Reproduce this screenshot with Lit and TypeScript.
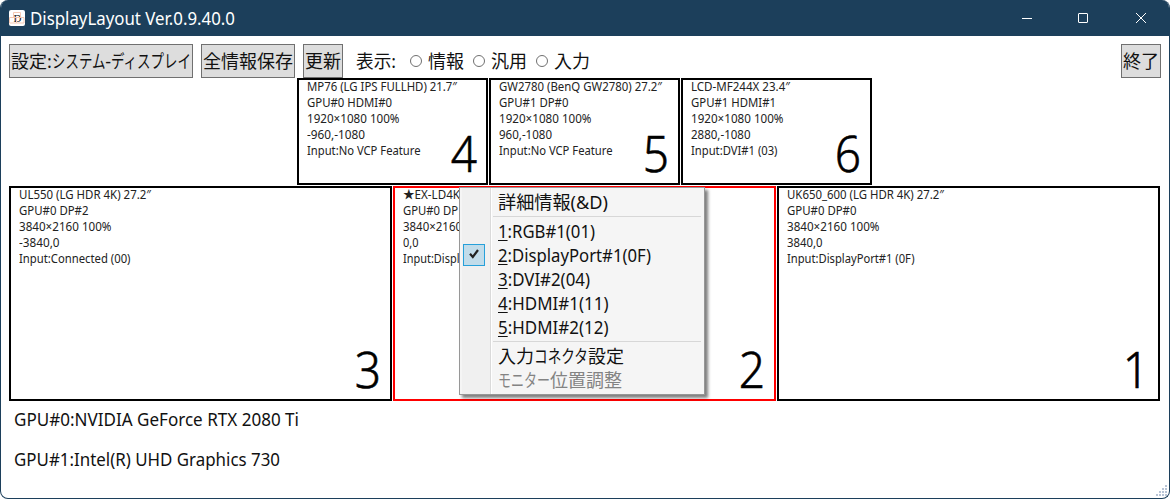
import { LitElement, html, css, svg, nothing } from "lit";
import { customElement, property } from "lit/decorators.js";

const FONT = css`"Noto Sans", "Noto Sans CJK JP", sans-serif`;

/**
 * One line of text set to the given advance width. Latin and kanji lines scale
 * as a whole; in lines with katakana only the katakana are condensed.
 */
@customElement("fit-text")
class FitText extends LitElement {
  @property({ type: Number }) w = 0;
  @property() text = "";
  @property({ type: Boolean }) mnemonic = false;

  static styles = css`
    :host { display: block; white-space: nowrap; flex: none; }
    .run, .part, .glyphs { display: inline-block; vertical-align: top; }
    .run, .glyphs { transform-origin: 0 50%; }
    .key { text-decoration: underline; text-decoration-thickness: 1px; text-underline-offset: 2px; }
  `;

  render() {
    if (this.mnemonic) {
      return html`<span class="run"><span class="key">${this.text[0]}</span>${this.text.slice(1)}</span>`;
    }
    const runs = this.text.split(/([\u30a0-\u30ff]+)/).filter((s) => s);
    return html`<span class="run">${runs.map((s) =>
      /[\u30a0-\u30ff]/.test(s) ? html`<span class="part"><span class="glyphs">${s}</span></span>` : s
    )}</span>`;
  }

  firstUpdated() {
    const run = this.renderRoot.querySelector(".run") as HTMLElement;
    const natural = run.getBoundingClientRect().width;
    if (!this.w || !natural) return;
    this.style.width = `${this.w}px`;
    const parts = [...this.renderRoot.querySelectorAll<HTMLElement>(".part")];
    if (!parts.length) {
      run.style.transform = `scaleX(${this.w / natural})`;
      return;
    }
    const widths = parts.map((p) => p.getBoundingClientRect().width);
    const kana = widths.reduce((a, b) => a + b, 0);
    const f = (this.w - (natural - kana)) / kana;
    parts.forEach((p, i) => {
      p.style.width = `${widths[i] * f}px`;
      (p.firstElementChild as HTMLElement).style.transform = `scaleX(${f})`;
    });
  }
}

type Line = [string, number];

interface Monitor {
  no: number;
  lines: Line[];
  active?: boolean;
}

const upper: Monitor[] = [
  { no: 4, lines: [["MP76 (LG IPS FULLHD) 21.7″", 150], ["GPU#0 HDMI#0", 85], ["1920×1080 100%", 92.5], ["-960,-1080", 58], ["Input:No VCP Feature", 113.5]] },
  { no: 5, lines: [["GW2780 (BenQ GW2780) 27.2″", 163], ["GPU#1 DP#0", 69.5], ["1920×1080 100%", 92.5], ["960,-1080", 53], ["Input:No VCP Feature", 113.5]] },
  { no: 6, lines: [["LCD-MF244X 23.4″", 99], ["GPU#1 HDMI#1", 85], ["1920×1080 100%", 92.5], ["2880,-1080", 59.5], ["Input:DVI#1 (03)", 86.5]] },
];

const lower: Monitor[] = [
  { no: 3, lines: [["UL550 (LG HDR 4K) 27.2″", 132], ["GPU#0 DP#2", 69.5], ["3840×2160 100%", 92.5], ["-3840,0", 40.5], ["Input:Connected (00)", 111.5]] },
  { no: 2, active: true, lines: [["★EX-LD4K", 57], ["GPU#0 DP", 55], ["3840×2160", 59], ["0,0", 15.5], ["Input:Displ", 56.5]] },
  { no: 1, lines: [["UK650_600 (LG HDR 4K) 27.2″", 157], ["GPU#0 DP#0", 69.5], ["3840×2160 100%", 92.5], ["3840,0", 35.5], ["Input:DisplayPort#1 (0F)", 127.5]] },
];

@customElement("monitor-box")
class MonitorBox extends LitElement {
  @property({ attribute: false }) data!: Monitor;

  static styles = css`
    :host { display: flex; box-sizing: border-box; }
    .box { flex: 1; box-sizing: border-box; border: 2px solid #000; display: flex; background: #fff; min-width: 0; }
    .active { border-color: #f00; }
    .info { margin: -1px 0 0 8px; font: 12px/16px ${FONT}; color: #222; flex: 1; min-width: 0; }
    .no { align-self: flex-end; flex: none; width: 44px; margin-left: -44px; text-align: center; font: 300 50px/60px ${FONT}; color: #000; -webkit-text-stroke: 0.6px #000; transform: scaleX(0.92); }
  `;

  render() {
    const m = this.data;
    return html`<div class="box ${m.active ? "active" : ""}">
      <div class="info">${m.lines.map(([t, w]) => html`<fit-text .text=${t} .w=${w}></fit-text>`)}</div>
      <div class="no">${m.no}</div>
    </div>`;
  }
}

interface Entry {
  text?: string;
  w?: number;
  key?: boolean;
  checked?: boolean;
  disabled?: boolean;
}

const entries: Entry[] = [
  { text: "詳細情報(&D)", w: 110 },
  {},
  { text: "1:RGB#1(01)", w: 97, key: true },
  { text: "2:DisplayPort#1(0F)", w: 153, key: true, checked: true },
  { text: "3:DVI#2(04)", w: 92, key: true },
  { text: "4:HDMI#1(11)", w: 110.5, key: true },
  { text: "5:HDMI#2(12)", w: 110.5, key: true },
  {},
  { text: "入力コネクタ設定", w: 126 },
  { text: "モニター位置調整", w: 124, disabled: true },
];

@customElement("context-menu")
class ContextMenu extends LitElement {
  static styles = css`
    :host { display: block; box-sizing: border-box; width: 246px; border: 1px solid #979797; padding: 2px 3px 2px 2px; font: 18px/24px ${FONT}; color: #111;
      background: linear-gradient(90deg, #f0f0f0 28px, #dadada 28px, #dadada 29px, #fff 29px, #fff 30px, #f5f5f5 30px) 2px 0 / 100% 100% no-repeat #f5f5f5;
      box-shadow: 3px 3px 3px rgba(0, 0, 0, 0.5); }
    .item { display: flex; height: 24px; }
    .mark { width: 36px; flex: none; padding-left: 1px; box-sizing: border-box; }
    .check { display: block; box-sizing: border-box; width: 22px; height: 22px; margin-top: 1px; border: 1px solid #26a0da; background: #c1dcea; }
    .disabled { color: #838383; }
    .sep { height: 5px; padding: 2px 0 0 31px; box-sizing: border-box; }
    .rule { height: 1px; background: #d7d7d7; }
  `;

  render() {
    return html`${entries.map((e) =>
      e.text
        ? html`<div class="item ${e.disabled ? "disabled" : ""}">
            <div class="mark">${e.checked
              ? html`<svg class="check" viewBox="0 0 20 20"><path d="M6 8.800 L8.800 12 L14 5" fill="none" stroke="#212121" stroke-width="2.200" /></svg>`
              : nothing}</div>
            <fit-text .text=${e.text} .w=${e.w ?? 0} .mnemonic=${!!e.key}></fit-text>
          </div>`
        : html`<div class="sep"><div class="rule"></div></div>`
    )}`;
  }
}

const grip: [number, number][] = [[9, 0], [6, 3], [9, 3], [3, 6], [6, 6], [9, 6], [0, 9], [3, 9], [6, 9], [9, 9]];

@customElement("app-root")
class AppRoot extends LitElement {
  static styles = css`
    :host { display: block; height: 499px; background: #fff; font: 18px/24px ${FONT}; color: #111; }
    .window { position: relative; box-sizing: border-box; height: 499px; border: 1px solid #1c3f5b; border-top: 0; border-radius: 8px; overflow: hidden; display: flex; flex-direction: column; background: #fff; }
    .title { height: 36px; flex: none; background: #1c3f5b; color: #fff; display: flex; align-items: center; }
    .logo { width: 16px; height: 16px; margin: 0 5px 0 8px; }
    .win { width: 57px; display: flex; justify-content: center; }
    .wins { display: flex; margin-left: auto; }
    .bar { display: flex; height: 34px; margin: 8px 8px 0; align-items: center; flex: none; }
    .btn { box-sizing: border-box; height: 34px; border: 1px solid #707070; background: #ddd; display: flex; align-items: center; justify-content: center; margin-right: 8px; flex: none; }
    .b1 { width: 184px; } .b2 { width: 94px; } .b3 { width: 40px; margin-right: 13px; }
    .b4 { width: 40px; margin: 0 0 0 auto; }
    .radio { box-sizing: border-box; width: 12px; height: 12px; border: 1px solid #707070; border-radius: 50%; margin-right: 6px; background: #fff; }
    .opt { display: flex; align-items: center; width: 63px; }
    .label { width: 54px; }
    .row { display: flex; gap: 1px; flex: none; }
    .upper { margin: 0 0 1px 296px; }
    .upper monitor-box { width: 191px; height: 107px; }
    .lower { margin-left: 8px; }
    .lower monitor-box { width: 383px; height: 215px; }
    .gpus { display: flex; flex-direction: column; gap: 16px; margin: 6px 0 0 13px; }
    .menu { position: absolute; left: 458px; top: 187px; }
    .grip { position: absolute; right: 1px; bottom: 1px; }
  `;

  render() {
    return html`<div class="window">
      <div class="title">
        <svg class="logo" viewBox="0 0 16 16">
          <rect width="16" height="16" rx="2" fill="#fff" />
          <text x="8.500" y="11.500" text-anchor="middle" font-family="Liberation Serif" font-size="11" fill="#222">D</text>
          <path d="M4.500 7.500V2.500h7V7.500zM.5 13V7.500h7V13zM7.500 7.500h7.500V13H7.500" fill="none" stroke="#f6c9b4" />
        </svg>
        <fit-text text="DisplayLayout Ver.0.9.40.0" w="205"></fit-text>
        <div class="wins">
          <div class="win"><svg width="10" height="10"><path d="M0 5.500H10" stroke="#fff" /></svg></div>
          <div class="win"><svg width="12" height="10"><rect x=".5" y=".5" width="9" height="9" rx=".5" fill="none" stroke="#fff" /></svg></div>
          <div class="win"><svg width="10" height="10"><path d="M0 0L10 10M10 0L0 10" stroke="#fff" /></svg></div>
        </div>
      </div>
      <div class="bar">
        <div class="btn b1"><fit-text text="設定:システム-ディスプレイ" w="180"></fit-text></div>
        <div class="btn b2"><fit-text text="全情報保存" w="90"></fit-text></div>
        <div class="btn b3"><fit-text text="更新" w="36"></fit-text></div>
        <div class="label"><fit-text text="表示:" w="40"></fit-text></div>
        ${["情報", "汎用", "入力"].map((t) => html`<div class="opt"><span class="radio"></span><fit-text .text=${t} .w=${36}></fit-text></div>`)}
        <div class="btn b4"><fit-text text="終了" w="36"></fit-text></div>
      </div>
      <div class="row upper">${upper.map((m) => html`<monitor-box .data=${m}></monitor-box>`)}</div>
      <div class="row lower">${lower.map((m) => html`<monitor-box .data=${m}></monitor-box>`)}</div>
      <div class="gpus">
        <fit-text text="GPU#0:NVIDIA GeForce RTX 2080 Ti" w="285"></fit-text>
        <fit-text text="GPU#1:Intel(R) UHD Graphics 730" w="266"></fit-text>
      </div>
      <context-menu class="menu"></context-menu>
      <svg class="grip" width="12" height="12">${grip.map(([x, y]) => svg`<rect x=${x} y=${y} width="2" height="2" fill="#b8c4d6" />`)}</svg>
    </div>`;
  }
}
